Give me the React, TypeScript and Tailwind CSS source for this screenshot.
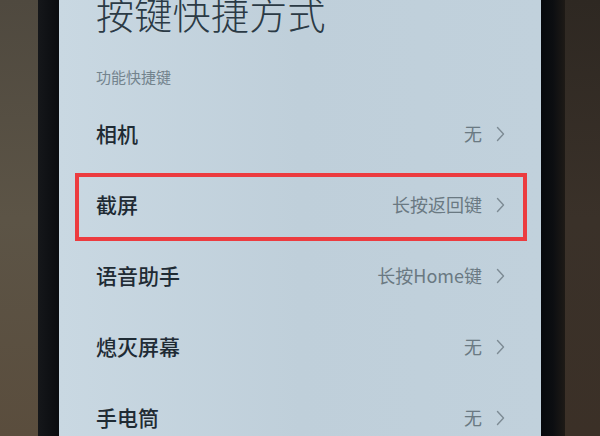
import React from "react";

const rows = [
  { label: "相机", value: "无" },
  { label: "截屏", value: "长按返回键", marked: true },
  { label: "语音助手", value: "长按Home键" },
  { label: "熄灭屏幕", value: "无" },
  { label: "手电筒", value: "无" },
];

function Chevron() {
  return (
    <svg width="9" height="16" viewBox="0 0 9 16" fill="none" className="shrink-0">
      <path d="M1.5 1.5 L7.5 8 L1.5 14.5" stroke="#7d8b94" strokeWidth="1.4" strokeLinecap="round" strokeLinejoin="round" />
    </svg>
  );
}

export default function App() {
  return (
    <div
      className="flex h-[436px] w-[600px] overflow-hidden"
      style={{ fontFamily: '"Noto Sans CJK SC", "Noto Sans", sans-serif' }}
    >
      {/* desk surface, left */}
      <div className="w-[38px] bg-gradient-to-b from-[#4f493f] via-[#5c5446] to-[#5a4d3d]" />
      {/* phone bezel, left */}
      <div className="w-[21px] bg-gradient-to-r from-[#15171a] to-[#0a0c0f]" />

      {/* screen */}
      <div className="relative flex-1 bg-gradient-to-r from-[#c9d8e2] via-[#bfcfda] to-[#c1d1dc] pl-[37px] pr-[36px]">
        <div className="-mt-[8px] h-[42px] text-[38px] font-light leading-[42px] tracking-[0.3px] text-[#2b3a45]">
          按键快捷方式
        </div>
        <div className="mt-[33px] h-[20px] text-[15px] leading-[20px] text-[#73838d]">功能快捷键</div>
        <div className="mt-[11px] flex flex-col">
          {rows.map((r) => (
            <div key={r.label} className="flex h-[71px] items-center justify-between">
              <span className="text-[21px] font-medium text-[#1f2b34]">{r.label}</span>
              <span className="flex items-center gap-[14px] text-[18px] text-[#6a7982]">
                {r.value}
                <Chevron />
              </span>
            </div>
          ))}
        </div>

        {/* red highlight frame around the screenshot row */}
        <div className="pointer-events-none absolute left-[16px] top-[173px] h-[68px] w-[452px] border-[4px] border-[#ec3b3f]" />
      </div>

      {/* phone bezel, right */}
      <div className="w-[24px] bg-gradient-to-r from-[#07090c] via-[#0c0e11] to-[#1e1a16]" />
      {/* desk surface, right */}
      <div className="w-[35px] bg-gradient-to-b from-[#2e2822] via-[#3a3129] to-[#3b3027]" />
    </div>
  );
}
